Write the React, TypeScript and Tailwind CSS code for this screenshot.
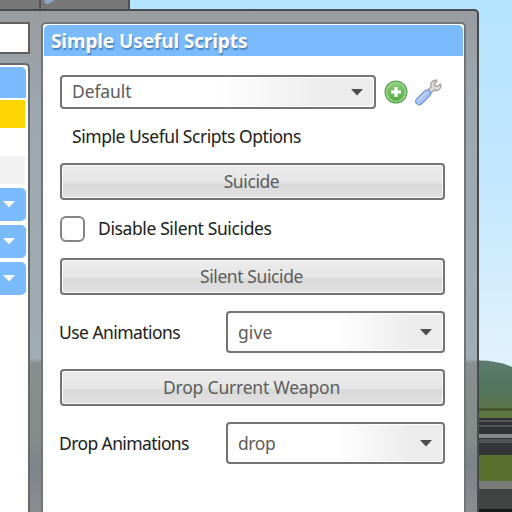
import React from "react";

const FONT = "font-['Noto_Sans','Open_Sans',sans-serif]";

function Arrow() {
  return (
    <svg width="12" height="7" viewBox="0 0 12 7" className="shrink-0">
      <path d="M0 0H12L6 6.5Z" fill="#4d4d4d" />
    </svg>
  );
}

function Select({ label, box, text }: { label: string; box: string; text: string }) {
  return (
    <div className={`flex items-center justify-between rounded-[4px] border-2 border-[#747474] bg-white p-px ${box}`}>
      <div className="flex h-full w-full items-center justify-between bg-linear-to-r from-white from-50% to-[#ececec] to-85% pr-[10px] pl-[9px]">
        <span className={`whitespace-nowrap text-[#5c5c5c] ${text}`}>{label}</span>
        <Arrow />
      </div>
    </div>
  );
}

function Button({ label, place, text }: { label: string; place: string; text: string }) {
  return (
    <div className={`h-[37px] w-[385px] rounded-[4px] border-2 border-[#747474] bg-[#f7f7f7] p-px ${place}`}>
      <div className="flex h-full w-full items-center justify-center bg-[linear-gradient(to_bottom,#ebebeb_0%,#e6e6e6_50%,#d8d8d8_60%,#e2e2e2_100%)] pr-[2px]">
        <span className={`whitespace-nowrap text-[#5c5c5c] ${text}`}>{label}</span>
      </div>
    </div>
  );
}

function Collapsed() {
  return (
    <div className="flex h-[33px] w-[26px] items-center rounded-r-[5px] bg-[#7abaff] pl-[3px]">
      <svg width="12" height="7" viewBox="0 0 12 7">
        <path d="M0 0H12L6 6.5Z" fill="#fff" />
      </svg>
    </div>
  );
}

function Scenery() {
  return (
    <svg width="512" height="512" viewBox="0 0 512 512" className="absolute inset-0">
      <defs>
        <linearGradient id="sky" x1="0" y1="0" x2="0" y2="1">
          <stop offset="0" stopColor="#b4e4ff" />
          <stop offset="0.35" stopColor="#c3e7fe" />
          <stop offset="0.7" stopColor="#e0f2fd" />
        </linearGradient>
        <linearGradient id="hill" x1="0" y1="0" x2="0" y2="1">
          <stop offset="0" stopColor="#5c7c70" />
          <stop offset="0.5" stopColor="#52735c" />
          <stop offset="1" stopColor="#5e763b" />
        </linearGradient>
      </defs>
      <rect width="512" height="512" fill="url(#sky)" />
      <path d="M470 361Q494 359 512 367V420H470Z" fill="url(#hill)" />
      <rect x="470" y="408" width="42" height="3" fill="#465830" />
      <rect x="470" y="418" width="42" height="17" fill="#303236" />
      <path d="M470 421H512M470 426H512" stroke="#5e6265" strokeWidth="1.5" />
      <rect x="470" y="434" width="42" height="4" fill="#85898a" />
      <rect x="470" y="438" width="42" height="18" fill="#343638" />
      <rect x="470" y="439" width="42" height="4" fill="#505354" />
      <rect x="470" y="455" width="42" height="27" fill="#586f2d" />
      <rect x="470" y="481" width="42" height="9" fill="#777b77" />
      <rect x="470" y="489" width="42" height="20" fill="#404341" />
      <rect x="470" y="509" width="42" height="3" fill="#171717" />
    </svg>
  );
}

function AddIcon() {
  return (
    <svg width="24" height="24" viewBox="0 0 24 24">
      <defs>
        <linearGradient id="add" x1="0" y1="0" x2="0" y2="1">
          <stop offset="0" stopColor="#8dce7c" />
          <stop offset="1" stopColor="#52ad45" />
        </linearGradient>
      </defs>
      <circle cx="12" cy="12" r="11.5" fill="#62a557" />
      <circle cx="12" cy="12" r="9.5" fill="url(#add)" stroke="#a8d99c" strokeWidth="1.2" />
      <path d="M12 7V17M7 12H17" stroke="#fff" strokeWidth="3.2" />
    </svg>
  );
}

function WrenchIcon() {
  return (
    <svg width="28" height="28" viewBox="0 0 28 28">
      <path d="M12 14L17 9C15.8 6 17.5 2.5 22 2L23 3L20.5 5.7L21 8L23.6 8.4L26.3 6L27 7.5C27 11.5 23 13.5 20 12L15 17Z" fill="#dedddb" stroke="#a5a19e" strokeWidth="1.4" strokeLinejoin="round" />
      <path d="M5.2 23.3L13.2 15.4" stroke="#7190d2" strokeWidth="8" strokeLinecap="round" />
      <path d="M5.2 23.3L13.2 15.4" stroke="#a6c4f6" strokeWidth="5.8" strokeLinecap="round" />
      <path d="M4.7 21.7L11.5 15" stroke="#c3d8fb" strokeWidth="1.6" strokeLinecap="round" />
    </svg>
  );
}

function Sidebar() {
  return (
    <div className="flex w-[30px] shrink-0 flex-col pt-[11px]">
      <div className="h-[33px] border-2 border-l-0 border-[#606060] bg-white" />
      <div className="mt-[9px] h-[460px] rounded-tr-[5px] border-t-2 border-r-2 border-[#686a6c] bg-white pt-[2px]">
        <div className="h-[31px] w-[26px] rounded-tr-[5px] bg-[#7abaff]" />
        <div className="mt-[2px] h-[28px] w-[25px] bg-[#ffd500]" />
        <div className="mt-[28px] h-[28px] w-[25px] bg-[#f2f2f2]" />
        <div className="mt-[4px] flex flex-col gap-[4px]">
          <Collapsed />
          <Collapsed />
          <Collapsed />
        </div>
      </div>
    </div>
  );
}

export default function App() {
  return (
    <div className={`relative h-[512px] w-[512px] overflow-hidden ${FONT} text-[17.5px] leading-none`}>
      <Scenery />
      <div className="relative flex h-full flex-col">
        <div className="flex h-[9px] w-[130px] border-r-2 border-[#505050] bg-[#777877]">
          <div className="w-[41px] border-r-2 border-[#555]" />
          <svg width="20" height="9" viewBox="0 0 20 9">
            <path d="M3 0Q4 6 9 3L14 0Z" fill="#91a4ca" />
          </svg>
        </div>
        <div className="flex h-[503px] w-[479px] rounded-tr-[5px] border-t-2 border-r-2 border-[#484b4d] bg-[linear-gradient(to_bottom,#999c9f_0px,#9ca7b0_100px,#a1adb4_348px,#888f8e_352px,#858c88_425px,#7e838a_455px,#8c8d90_503px)]">
          <Sidebar />
          <div className="ml-[11px] mt-[11px] h-[500px] w-[425px] shrink-0 rounded-t-[5px] border-2 border-[#737476] bg-white px-px pt-px">
            <div className="flex h-[31px] items-center rounded-t-[5px] bg-[#7abaff] pl-[7px] pt-[2px]">
              <span className="whitespace-nowrap text-[19px] font-bold tracking-[-0.1px] text-white [text-shadow:1px_2px_1px_#5185ba]">Simple Useful Scripts</span>
            </div>
            <div className="flex flex-col pl-[16px] pt-[19px]">
              <div className="flex h-[34px] items-center">
                <Select label="Default" box="h-[34px] w-[316px]" text="tracking-[-0.1px]" />
                <div className="ml-[8px]"><AddIcon /></div>
                <div className="ml-[6px]"><WrenchIcon /></div>
              </div>
              <div className="mt-[16px] flex h-[24px] items-center pl-[12px]">
                <span className="whitespace-nowrap text-[#202020] tracking-[-0.45px]">Simple Useful Scripts Options</span>
              </div>
              <Button label="Suicide" place="mt-[14px]" text="tracking-[-0.4px]" />
              <div className="mt-[16px] flex h-[26px] items-center">
                <div className="h-[26px] w-[25px] rounded-[6px] border-2 border-[#858585] bg-white" />
                <span className="ml-[13px] whitespace-nowrap tracking-[-0.38px] text-[#202020]">Disable Silent Suicides</span>
              </div>
              <Button label="Silent Suicide" place="mt-[16px]" text="tracking-[-0.4px]" />
              <div className="mt-[16px] flex h-[42px] w-[385px] items-center justify-between">
                <span className="-ml-px whitespace-nowrap pt-[2px] tracking-[-0.55px] text-[#202020]">Use Animations</span>
                <Select label="give" box="h-[42px] w-[219px]" text="tracking-[0.1px] pt-px" />
              </div>
              <Button label="Drop Current Weapon" place="mt-[16px]" text="tracking-[-0.2px]" />
              <div className="mt-[16px] flex h-[42px] w-[385px] items-center justify-between">
                <span className="-ml-px whitespace-nowrap pt-[2px] tracking-[-0.6px] text-[#202020]">Drop Animations</span>
                <Select label="drop" box="h-[42px] w-[219px]" text="tracking-[-0.4px] pt-px" />
              </div>
            </div>
          </div>
        </div>
      </div>
    </div>
  );
}
